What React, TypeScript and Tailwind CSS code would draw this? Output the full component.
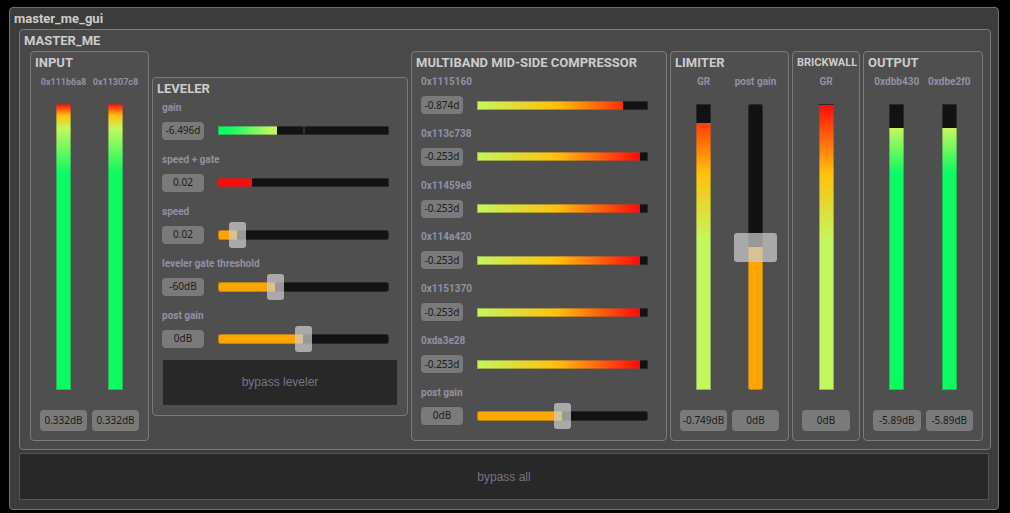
import { useId, useState, type ReactNode } from "react";
import clsx from "clsx";

const RED = "#ff0a0a";
const AMBER = "#ffc00a";
const LIME = "#c4f75f";
const GREEN = "#0cfa62";
const TRACK = "#121212";
const FILL = "#ffa500";

const LEVEL = `${GREEN} 76%, ${LIME} 91.5%, ${AMBER} 96%, ${RED} 100%`;
const REDUCTION = `${LIME} 0%, ${LIME} 52%, ${AMBER} 76%, ${RED} 100%`;
const BAND = `${LIME} 0%, ${AMBER} 47%, ${RED} 95%`;
const GAIN = `${GREEN} 0%, ${GREEN} 6%, ${LIME} 32%`;
const FLAT_RED = `${RED}, ${RED}`;

function Panel({ title, children, className, tight }: { title: string; children: ReactNode; className?: string; tight?: boolean }) {
  return (
    <section className={clsx("flex min-w-0 flex-col rounded-[4px] border border-[#7b7b7b] bg-[#4f4f4f]", className)}>
      <h2 className={clsx("h-[22px] pl-1 leading-[22px] font-bold whitespace-nowrap text-[#cccccc]", tight ? "text-[11px]" : "text-[13px]")}>
        {title}
      </h2>
      {children}
    </section>
  );
}

function Value({ children, tall }: { children: ReactNode; tall?: boolean }) {
  return (
    <output
      className={clsx(
        "flex items-center justify-center rounded-[4px] bg-[#7a7a7a] font-['Noto_Sans',sans-serif] text-[10px] whitespace-nowrap text-[#1c1c1c]",
        tall ? "h-[21px] w-full" : "h-[18px] w-[42px] shrink-0",
      )}
    >
      {children}
    </output>
  );
}

function Bar({ amount, scale, label, vertical, tick }: { amount: number; scale: string; label: string; vertical?: boolean; tick?: boolean }) {
  const dir = vertical ? "to top" : "to right";
  return (
    <div
      role="meter"
      aria-label={label}
      aria-valuemin={0}
      aria-valuemax={100}
      aria-valuenow={amount}
      className={clsx("flex justify-center shadow-[inset_0_0_0_1px_rgba(79,79,79,0.4)]", vertical ? "h-[286px] w-[15px]" : "h-[9px] w-full")}
      style={{ backgroundImage: `linear-gradient(${dir}, transparent ${amount}%, ${TRACK} ${amount}%), linear-gradient(${dir}, ${scale})` }}
    >
      {tick && <span className="h-full w-[2px] bg-[#303030]" />}
    </div>
  );
}

type SliderProps = { id: string; initial: number; min: number; max: number; step: number };

function Slider({ id, initial, min, max, step, vertical }: SliderProps & { vertical?: boolean }) {
  const [value, setValue] = useState(initial);
  const amount = ((value - min) / (max - min)) * 100;
  return (
    <div className={clsx("grid items-center", vertical ? "h-[286px] w-[43px] grid-rows-[286px] justify-items-center" : "h-[26px] w-full")}>
      <div
        className={clsx(
          "rounded-[3px] shadow-[inset_0_0_0_1px_rgba(79,79,79,0.4)] [grid-area:1/1]",
          vertical ? "h-[286px] w-[15px]" : "h-[10px] w-full",
        )}
        style={{ backgroundImage: `linear-gradient(${vertical ? "to top" : "to right"}, ${FILL} ${amount}%, ${TRACK} ${amount}%)` }}
      />
      <input
        id={id}
        type="range"
        min={min}
        max={max}
        step={step}
        value={value}
        onChange={(e) => setValue(Number(e.target.value))}
        className={clsx(
          "appearance-none bg-transparent [grid-area:1/1] [&::-webkit-slider-thumb]:appearance-none [&::-webkit-slider-thumb]:rounded-[3px] [&::-webkit-slider-thumb]:bg-[#cbcbcb]/73",
          vertical
            ? "h-[314px] w-[43px] [direction:rtl] [writing-mode:vertical-lr] [&::-webkit-slider-thumb]:h-[29px] [&::-webkit-slider-thumb]:w-[43px]"
            : "-mx-2 h-[26px] [&::-webkit-slider-thumb]:h-[26px] [&::-webkit-slider-thumb]:w-[17px]",
        )}
      />
    </div>
  );
}

const labelBase = "block h-4 leading-4 font-bold whitespace-nowrap text-[#938fa3]";

function Caption({ children, htmlFor, small }: { children: ReactNode; htmlFor?: string; small?: boolean }) {
  const className = clsx(labelBase, small ? "text-[9px]" : "text-[10px]");
  return htmlFor ? <label htmlFor={htmlFor} className={className}>{children}</label> : <span className={className}>{children}</span>;
}

function Row({ label, value, children, htmlFor }: { label: string; value: string; children: ReactNode; htmlFor?: string }) {
  return (
    <div className="pr-[9px]">
      <Caption htmlFor={htmlFor}>{label}</Caption>
      <div className="mt-[6px] flex h-[18px] items-center gap-[14px]">
        <Value>{value}</Value>
        {children}
      </div>
    </div>
  );
}

function BarRow({ label, value, amount, scale, tick }: { label: string; value: string; amount: number; scale: string; tick?: boolean }) {
  return (
    <Row label={label} value={value}>
      <Bar label={label} amount={amount} scale={scale} tick={tick} />
    </Row>
  );
}

function SliderRow({ label, value, ...range }: { label: string; value: string } & Omit<SliderProps, "id">) {
  const id = useId();
  return (
    <Row label={label} value={value} htmlFor={id}>
      <Slider id={id} {...range} />
    </Row>
  );
}

type StripProps = { label: string; value: string; small?: boolean };

function Strip({ label, value, small, children, htmlFor }: StripProps & { children: ReactNode; htmlFor?: string }) {
  return (
    <div className="flex min-w-0 flex-1 flex-col items-center">
      <Caption htmlFor={htmlFor} small={small}>{label}</Caption>
      <div className="mt-[14px] mb-5">{children}</div>
      <Value tall>{value}</Value>
    </div>
  );
}

function MeterStrip({ label, value, small, amount, scale }: StripProps & { amount: number; scale: string }) {
  return (
    <Strip label={label} value={value} small={small}>
      <Bar label={label} amount={amount} scale={scale} vertical />
    </Strip>
  );
}

function Strips({ children }: { children: ReactNode }) {
  return <div className="flex gap-[5px] px-[9px] pb-[9px]">{children}</div>;
}

const bands = [
  { label: "0x1115160", value: "-0.874d", amount: 85.5 },
  { label: "0x113c738", value: "-0.253d", amount: 95.5 },
  { label: "0x11459e8", value: "-0.253d", amount: 95.5 },
  { label: "0x114a420", value: "-0.253d", amount: 95.5 },
  { label: "0x1151370", value: "-0.253d", amount: 95.5 },
  { label: "0xda3e28", value: "-0.253d", amount: 95.5 },
];

const bypassClass = "bg-[#282828] font-['Liberation_Sans',Arial,sans-serif] text-[12px] text-[#777385]";

export default function App() {
  const limiterGain = useId();
  return (
    <main className="min-h-screen bg-black pt-[7px] pr-[11px] pb-[3px] pl-[9px] font-[Roboto,sans-serif]">
      <div className="rounded-[4px] border border-[#737373] bg-[#3c3c3c] pr-[7px] pb-[9px] pl-[9px]">
        <h1 className="-ml-[5px] h-[21px] text-[13px] leading-[21px] font-bold text-[#cccccc]">master_me_gui</h1>
        <section className="rounded-[4px] border border-[#7b7b7b] bg-[#494949] pr-[7px] pb-2 pl-[10px]">
          <h2 className="-ml-[6px] h-[21px] text-[13px] leading-[21px] font-bold text-[#cccccc]">MASTER_ME</h2>
          <div className="grid grid-cols-[119fr_256fr_256fr_119fr_68fr_120fr] gap-[3px]">
            <Panel title="INPUT">
              <Strips>
                <MeterStrip label="0x111b6a8" value="0.332dB" small amount={100} scale={LEVEL} />
                <MeterStrip label="0x11307c8" value="0.332dB" small amount={100} scale={LEVEL} />
              </Strips>
            </Panel>

            <Panel title="LEVELER" className="self-center">
              <div className="flex flex-col gap-3 px-[9px] pb-[10px]">
                <BarRow label="gain" value="-6.496d" amount={34.5} scale={GAIN} tick />
                <BarRow label="speed + gate" value="0.02" amount={20} scale={FLAT_RED} />
                <SliderRow label="speed" value="0.02" initial={11} min={0} max={100} step={1} />
                <SliderRow label="leveler gate threshold" value="-60dB" initial={-60} min={-90} max={0} step={1} />
                <SliderRow label="post gain" value="0dB" initial={0} min={-10} max={10} step={1} />
                <button type="button" className={clsx("mx-px h-[45px]", bypassClass)}>bypass leveler</button>
              </div>
            </Panel>

            <Panel title="MULTIBAND MID-SIDE COMPRESSOR">
              <div className="flex flex-1 flex-col justify-between px-[9px] pb-[15px]">
                {bands.map((band) => (
                  <BarRow key={band.label} {...band} scale={BAND} />
                ))}
                <SliderRow label="post gain" value="0dB" initial={0} min={-10} max={10} step={1} />
              </div>
            </Panel>

            <Panel title="LIMITER">
              <Strips>
                <MeterStrip label="GR" value="-0.749dB" amount={93.5} scale={REDUCTION} />
                <Strip label="post gain" value="0dB" htmlFor={limiterGain}>
                  <Slider id={limiterGain} initial={0} min={-10} max={10} step={1} vertical />
                </Strip>
              </Strips>
            </Panel>

            <Panel title="BRICKWALL" tight>
              <Strips>
                <MeterStrip label="GR" value="0dB" amount={99.5} scale={REDUCTION} />
              </Strips>
            </Panel>

            <Panel title="OUTPUT">
              <Strips>
                <MeterStrip label="0xdbb430" value="-5.89dB" amount={91.5} scale={LEVEL} />
                <MeterStrip label="0xdbe2f0" value="-5.89dB" amount={91.5} scale={LEVEL} />
              </Strips>
            </Panel>
          </div>
        </section>
        <div className="mt-[3px] flex pr-[2px]">
          <button type="button" className={clsx("h-[47px] flex-1 border border-[#555555]", bypassClass)}>bypass all</button>
        </div>
      </div>
    </main>
  );
}
